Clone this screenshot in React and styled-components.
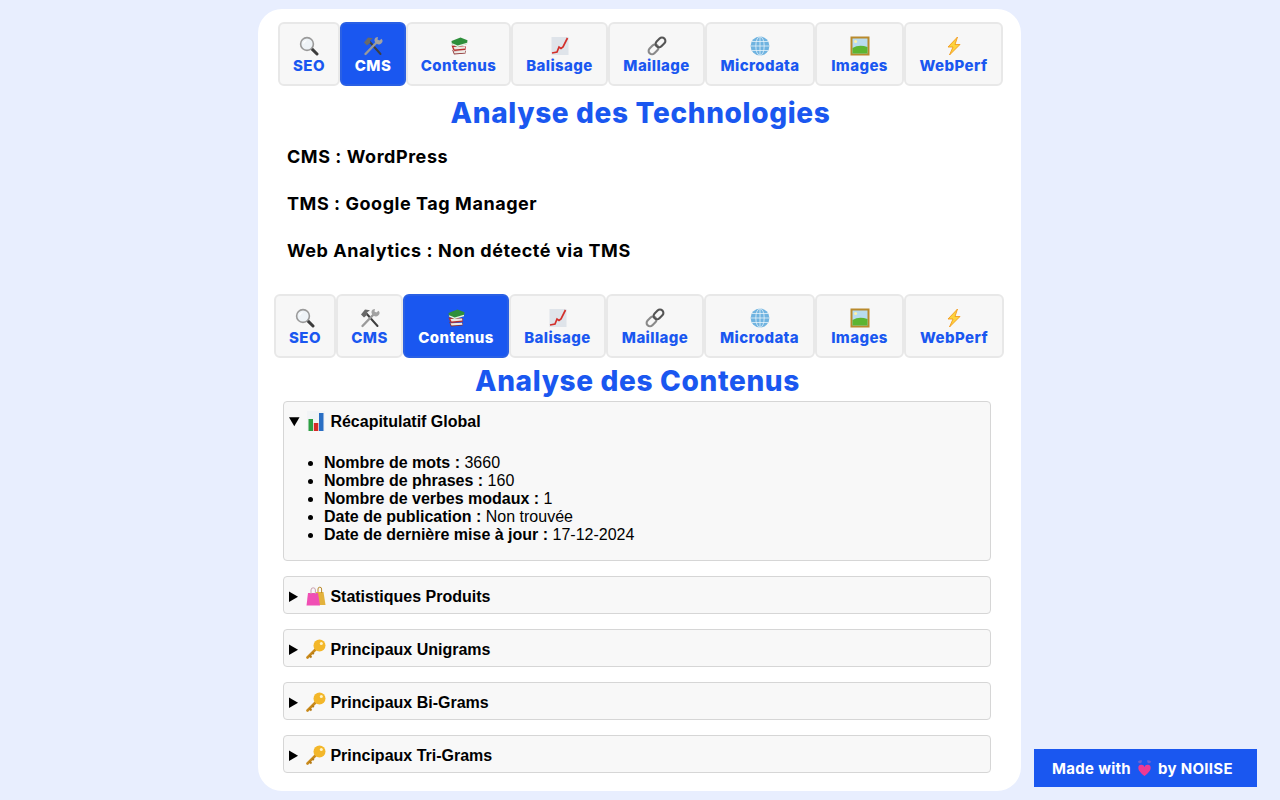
import React from "react";
import styled, { createGlobalStyle } from "styled-components";

const BLUE = "#1a57f0";
const HEAD = `"Inter", "Noto Sans", sans-serif`;

const Global = createGlobalStyle`
  html, body { margin: 0; padding: 0; background: #e8eefe; height: 100%; overflow: hidden; }
  body { font-family: "Liberation Sans", Arial, sans-serif; color: #000; }
`;

const Page = styled.div`
  padding: 9px 0 0 258px;
`;
const Panel = styled.main`
  width: 763px;
  height: 782px;
  box-sizing: border-box;
  background: #fff;
  border-radius: 24px;
  padding: 13px 0 0;
  display: flex;
  flex-direction: column;
`;
const TabRow = styled.nav`
  display: flex;
  height: 64px;
  margin-left: ${(p) => p.$ml}px;
`;
const Tab = styled.button`
  width: ${(p) => p.$w}px;
  height: 64px;
  box-sizing: border-box;
  padding: 12px 0 0;
  margin: 0;
  border: 2px solid ${(p) => (p.$active ? "#2a60e4" : "#e8e8e8")};
  border-radius: 6px;
  background: ${(p) => (p.$active ? BLUE : "#f7f7f7")};
  color: ${(p) => (p.$active ? "#fff" : BLUE)};
  font-family: ${HEAD};
  font-weight: 800;
  font-size: 15px;
  letter-spacing: 0.4px;
  line-height: 18px;
  display: flex;
  flex-direction: column;
  align-items: center;
  gap: 1px;
`;
const Title = styled.h2`
  margin: ${(p) => p.$mt}px 0 0;
  padding: 0 ${(p) => p.$pr || 0}px 0 ${(p) => p.$pl || 0}px;
  font-family: ${HEAD};
  font-weight: 800;
  font-size: 28px;
  letter-spacing: 0.65px;
  line-height: 34px;
  color: ${BLUE};
  text-align: center;
`;
const Info = styled.div`
  margin: 16px 0 7px 29px;
`;
const InfoLine = styled.p`
  margin: 0 0 25px;
  font-family: ${HEAD};
  font-weight: 700;
  font-size: 18px;
  letter-spacing: 0.55px;
  line-height: 22px;
`;
const Accordion = styled.div`
  width: 708px;
  margin: 3px 0 0 25px;
  display: flex;
  flex-direction: column;
  gap: 15px;
`;
const Details = styled.details`
  box-sizing: border-box;
  border: 1px solid #d6d6d6;
  border-radius: 4px;
  background: #f8f8f8;
  padding: 5px;
`;
const Summary = styled.summary`
  font-weight: 700;
  font-size: 16px;
  line-height: 23px;
  padding-top: 3px;
  white-space: nowrap;
  svg { vertical-align: -4px; }
`;
const List = styled.ul`
  margin: 21px 0 11px;
  padding-left: 35px;
  font-size: 16px;
  line-height: 18px;
`;
const Badge = styled.a`
  position: fixed;
  left: 1034px;
  top: 749px;
  width: 223px;
  height: 38px;
  box-sizing: border-box;
  padding-left: 18px;
  background: ${BLUE};
  color: #fff;
  font-family: ${HEAD};
  font-weight: 700;
  font-size: 15px;
  letter-spacing: 0.3px;
  display: flex;
  align-items: center;
  gap: 4px;
  white-space: nowrap;
`;

const Svg = ({ s = 20, children }) => (
  <svg width={s} height={s} viewBox="0 0 20 20" aria-hidden="true">{children}</svg>
);

const Mag = () => (
  <Svg>
    <path d="M12.6 12.6 L18 18" stroke="#3c3c3c" strokeWidth="3" strokeLinecap="round" />
    <circle cx="8" cy="8" r="6.4" fill="#eef3f7" stroke="#9a9a9a" strokeWidth="1.6" />
    <path d="M4.5 7.5a4 4 0 0 1 3-3" stroke="#fff" strokeWidth="1.2" fill="none" />
  </Svg>
);
const Tools = () => (
  <Svg>
    <path d="M5.5 4.5 L17.5 18" stroke="#3f3f3f" strokeWidth="2" strokeLinecap="round" />
    <path d="M14.5 5.5 L2.5 18" stroke="#9a9a9a" strokeWidth="2.4" strokeLinecap="round" />
    <path d="M1 6.5 L5 1.5 L10 2.2 L7 4.5 L7.5 6.5 L4 9.5 Z" fill="#6a6a6a" />
    <path d="M12.8 1.4 a3.4 3.4 0 0 0 .6 5.8 a3.4 3.4 0 0 0 5.2 -4.4 l-2.3 1.8 l-1.8 -1.2 l.5 -2.4 z" fill="#a2a2a2" />
  </Svg>
);
const Books = () => (
  <Svg>
    <path d="M3 13.5 L5 18.5 L16.5 17.5 L17 14.5 L15 15.5 L5 15 Z" fill="#8d2f2f" />
    <path d="M4.5 15.2 L16 14.8 L16.5 16.8 L5.5 17.6 Z" fill="#ecebe6" />
    <path d="M2.5 9.5 L4 13.5 L5.5 15 L16.5 14 L17 10.5 Z" fill="#b5302e" />
    <path d="M4.5 11 L16 10.5 L16.3 12.6 L5.5 13.4 Z" fill="#ece8e2" />
    <path d="M2.5 5 L11.5 1.5 L18.5 4.2 L18 8 L8.5 11 L3 8.5 Z" fill="#2e8f3b" />
    <path d="M3.2 7.2 L8.6 9.6 L18 6.8 L18 8.2 L8.5 11 L3 8.5 Z" fill="#e8efe4" />
  </Svg>
);
const Chart = () => (
  <Svg>
    <rect x="1.5" y="1" width="17" height="18" fill="#dfe4ea" />
    <path d="M2 17 L7 16 L9 11 L11 12.5 L13 11 L17.5 2" stroke="#d3302b" strokeWidth="1.7" fill="none" />
  </Svg>
);
const LinkI = () => (
  <Svg>
    <rect x="1" y="10" width="11" height="6.8" rx="3.4" transform="rotate(-45 6.5 13.4)" fill="none" stroke="#8a8a8a" strokeWidth="2.1" />
    <rect x="8" y="3" width="11" height="6.8" rx="3.4" transform="rotate(-45 13.5 6.4)" fill="none" stroke="#555" strokeWidth="2.1" />
  </Svg>
);
const Globe = () => (
  <Svg>
    <circle cx="10" cy="10" r="9.4" fill="#6fb3e0" />
    <g fill="none" stroke="#e6f2fa" strokeWidth=".8">
      <ellipse cx="10" cy="10" rx="4.2" ry="9.4" />
      <path d="M10 .6V19.4M.6 10H19.4M2 5.5H18M2 14.5H18" />
    </g>
  </Svg>
);
const Picture = () => (
  <Svg>
    <rect x=".5" y=".5" width="19" height="19" fill="#b98a2c" />
    <rect x="2.5" y="2.5" width="15" height="15" fill="#b8dcef" />
    <circle cx="5.6" cy="5.6" r="1.5" fill="#fff2a8" />
    <path d="M2.5 12 Q9 8 17.5 11 V17.5 H2.5 Z" fill="#5cb531" />
  </Svg>
);
const Bolt = () => (
  <Svg>
    <path d="M13.5 1 L4 11 H9 L5.5 19 L16 8.5 H11 Z" fill="#fdd33c" stroke="#f29a1e" strokeWidth=".9" />
  </Svg>
);
const Bars = () => (
  <Svg>
    <rect x="1" y="0" width="18" height="20" fill="#f2f4f6" />
    <rect x="2.5" y="8" width="4.5" height="12" fill="#2ea043" />
    <rect x="7.8" y="12" width="4.5" height="8" fill="#d62b27" />
    <rect x="13" y="2" width="4.5" height="18" fill="#2a6fc4" />
  </Svg>
);
const Bags = () => (
  <Svg>
    <path d="M10 6 H17.5 L19.5 19 H12 Z" fill="#e3b23c" />
    <path d="M2 7 H12 L14 19.5 H.5 Z" fill="#f04fb4" />
    <path d="M5 8 V4 a2.2 2.2 0 0 1 4.4 0 V8" fill="none" stroke="#c9a0b0" strokeWidth="1" />
    <path d="M12 6 V3 a1.8 1.8 0 0 1 3.6 0 V7" fill="none" stroke="#b98a2c" strokeWidth="1" />
  </Svg>
);
const Key = () => (
  <Svg>
    <path d="M10.5 9.5 L1.5 18.5" stroke="#c98a1b" strokeWidth="2.6" strokeLinecap="round" />
    <path d="M3.5 16.5 L5.5 18.5 M6.3 13.7 L7.8 15.2" stroke="#b57a15" strokeWidth="1.8" />
    <circle cx="13.5" cy="6.5" r="6" fill="#f3b72a" />
    <circle cx="15.3" cy="4.5" r="1.5" fill="#fff4c8" />
  </Svg>
);
const Heart = () => (
  <Svg s={19}>
    <path d="M4 4 a2.5 2.5 0 0 1 3 -1 M16 4 a2.5 2.5 0 0 0 -3 -1" stroke="#a86fc0" strokeWidth="3" fill="none" opacity=".55" />
    <path d="M10 18 C5 14 3.5 11.5 3.5 9.5 a3.3 3.3 0 0 1 6.5 -1 a3.3 3.3 0 0 1 6.5 1 c0 2 -1.5 4.5 -6.5 8.5 Z" fill="#ee3a94" />
  </Svg>
);

const tabs = [
  ["SEO", Mag], ["CMS", Tools], ["Contenus", Books], ["Balisage", Chart],
  ["Maillage", LinkI], ["Microdata", Globe], ["Images", Picture], ["WebPerf", Bolt],
];

const Tabs = ({ active, widths, ml }) => (
  <TabRow $ml={ml}>
    {tabs.map(([label, Icon], i) => (
      <Tab key={label} $w={widths[i]} $active={label === active}>
        <Icon />
        {label}
      </Tab>
    ))}
  </TabRow>
);

const closed = [
  [Bags, "Statistiques Produits"],
  [Key, "Principaux Unigrams"],
  [Key, "Principaux Bi-Grams"],
  [Key, "Principaux Tri-Grams"],
];

export default function App() {
  return (
    <>
      <Global />
      <Page>
        <Panel>
          <Tabs active="CMS" ml={20} widths={[62, 66, 105, 97, 97, 110, 89, 99]} />
          <Title $mt={10} $pl={2}>Analyse des Technologies</Title>
          <Info>
            <InfoLine>CMS : WordPress</InfoLine>
            <InfoLine>TMS : Google Tag Manager</InfoLine>
            <InfoLine>Web Analytics : Non détecté via TMS</InfoLine>
          </Info>
          <Tabs active="Contenus" ml={16} widths={[62, 67, 106, 97, 98, 111, 89, 100]} />
          <Title $mt={6} $pr={4}>Analyse des Contenus</Title>
          <Accordion>
            <Details open>
              <Summary><Bars /> Récapitulatif Global</Summary>
              <List>
                <li><b>Nombre de mots :</b> 3660</li>
                <li><b>Nombre de phrases :</b> 160</li>
                <li><b>Nombre de verbes modaux :</b> 1</li>
                <li><b>Date de publication :</b> Non trouvée</li>
                <li><b>Date de dernière mise à jour :</b> 17-12-2024</li>
              </List>
            </Details>
            {closed.map(([Icon, text]) => (
              <Details key={text}>
                <Summary><Icon /> {text}</Summary>
              </Details>
            ))}
          </Accordion>
        </Panel>
      </Page>
      <Badge>Made with <Heart /> by NOIISE</Badge>
    </>
  );
}
